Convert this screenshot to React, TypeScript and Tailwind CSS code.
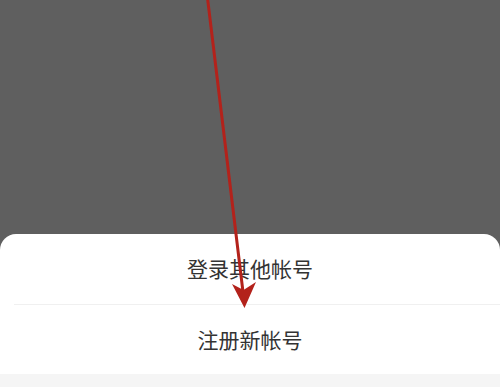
export default function App() {
  return (
    <div
      className="relative flex h-[387px] w-[500px] flex-col overflow-hidden bg-[#5f5f5f]"
      style={{ fontFamily: '"Noto Sans CJK SC", "Noto Sans", sans-serif' }}
    >
      <div className="flex-1" />
      <div className="flex h-[153px] flex-col overflow-hidden rounded-t-[16px] bg-white">
        <button className="flex h-[70px] items-center justify-center text-[21px] text-[#333333]">
          登录其他帐号
        </button>
        <div className="ml-[14px] h-px bg-[#f0f0f0]" />
        <button className="flex h-[69px] items-center justify-center text-[21px] text-[#333333]">
          注册新帐号
        </button>
        <div className="flex-1 bg-[#f5f5f5]" />
      </div>

      {/* red annotation arrow */}
      <svg
        className="pointer-events-none absolute left-0 top-0"
        width="500"
        height="387"
        viewBox="0 0 500 387"
      >
        <line x1="207.5" y1="-2" x2="243" y2="292" stroke="#b3221b" strokeWidth="3" strokeLinecap="round" />
        <path d="M232 284 L243.5 290 L256 282 L244.5 308 Z" fill="#b3221b" />
      </svg>
    </div>
  )
}
